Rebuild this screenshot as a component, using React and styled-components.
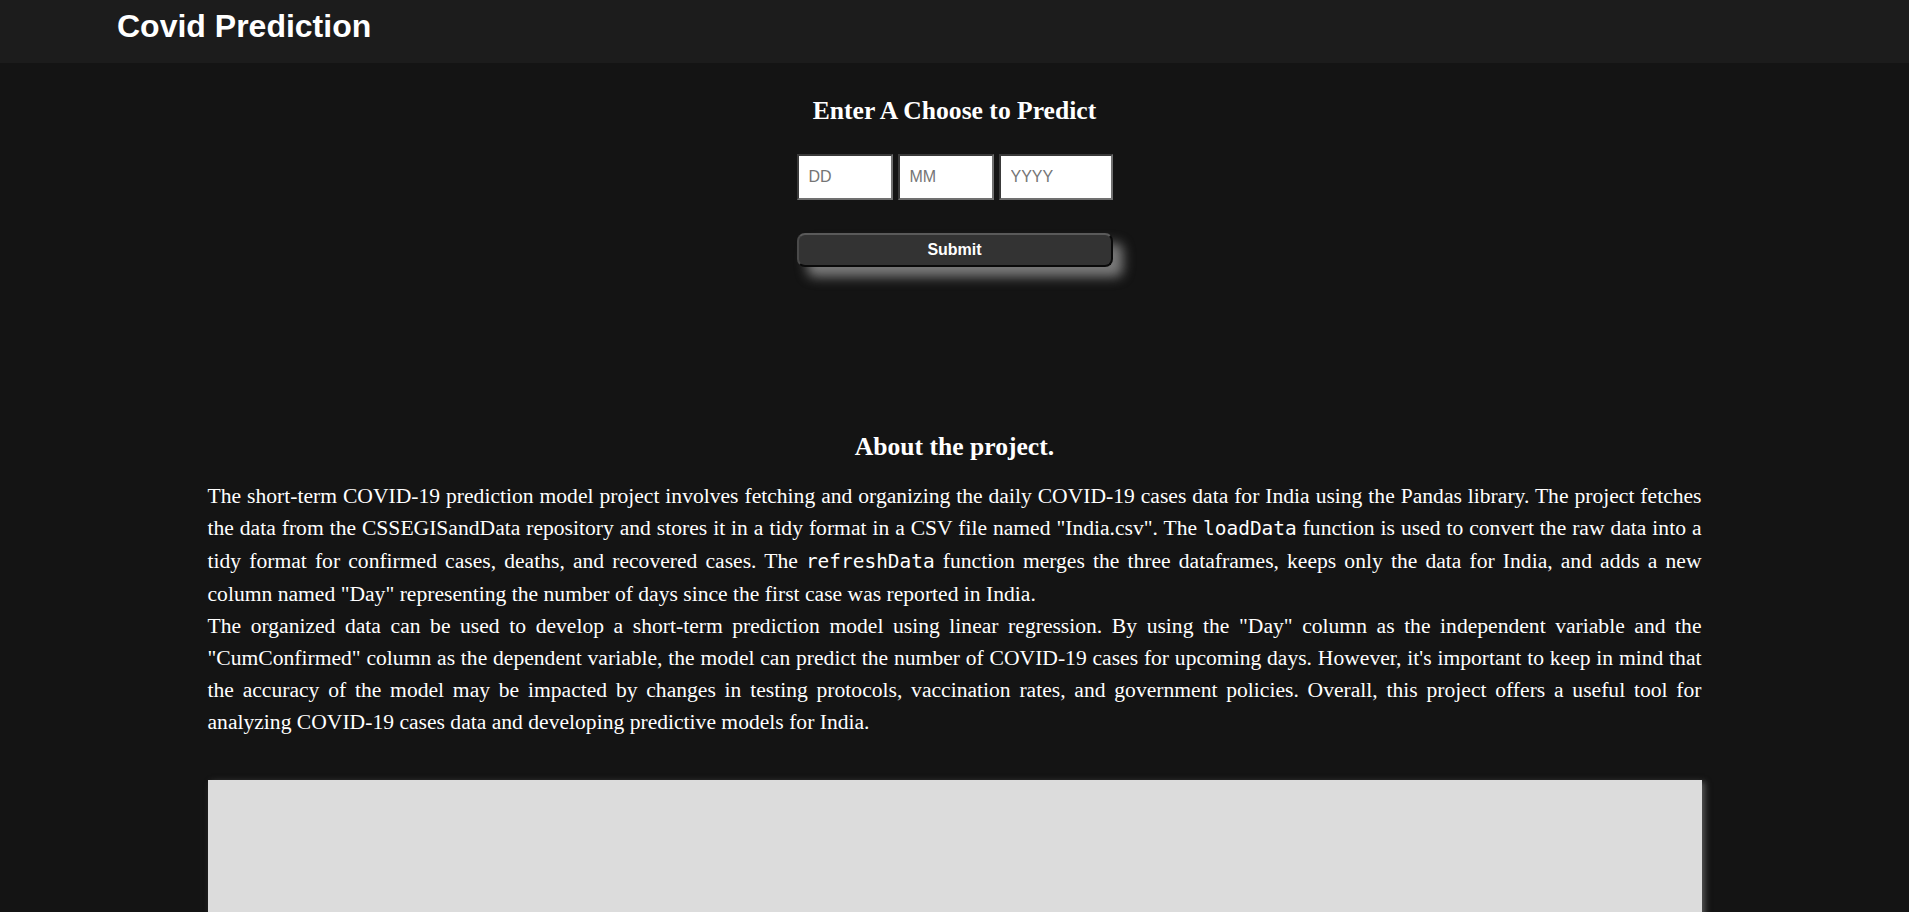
import React from 'react';
import styled, { createGlobalStyle } from 'styled-components';

const GlobalStyle = createGlobalStyle`
  * {
    box-sizing: border-box;
  }
  html,
  body {
    margin: 0;
    padding: 0;
    background-color: #141414;
    color: #fff;
    font-family: 'Liberation Serif', 'Times New Roman', serif;
  }
`;

const Header = styled.header`
  height: 63px;
  padding: 8px 0 0 117px;
  background-color: #1c1c1c;
`;

const Brand = styled.h1`
  margin: 0;
  font-family: 'Liberation Sans', Arial, sans-serif;
  font-size: 32px;
  font-weight: 700;
  line-height: 37px;
  color: #fff;
`;

const Main = styled.main`
  display: flex;
  flex-direction: column;
  align-items: center;
`;

const Heading = styled.h2`
  margin: ${props => props.$top || 0}px 0 0;
  font-size: 25.6px;
  font-weight: 700;
  line-height: 30px;
  text-align: center;
`;

const PredictForm = styled.form`
  display: flex;
  flex-direction: column;
  width: 316px;
`;

const InputRow = styled.div`
  display: flex;
  gap: 5px;
  margin-top: 28px;
`;

const DateInput = styled.input`
  width: ${props => props.$width}px;
  height: 46px;
  padding: 0 10px;
  background: #fff;
  border-style: solid;
  border-width: 2px;
  border-color: #3a3a3a #707070 #707070 #3a3a3a;
  font-family: 'Liberation Sans', Arial, sans-serif;
  font-size: 16px;
  color: #222;
  outline: none;

  ::placeholder {
    color: #757575;
  }
`;

const SubmitButton = styled.button`
  margin-top: 33px;
  height: 34px;
  width: 100%;
  border-radius: 8px;
  border-style: solid;
  border-width: 2px;
  border-color: #5a5a5a #0a0a0a #0a0a0a #4a4a4a;
  background-color: #333;
  color: #fff;
  font-family: 'Liberation Sans', Arial, sans-serif;
  font-size: 16px;
  font-weight: 700;
  box-shadow: 10px 10px 12px #7a7a7a;
  cursor: pointer;
`;

const About = styled.section`
  width: 1494px;
`;

const Para = styled.p`
  margin: ${props => props.$top || 0}px 0 0;
  font-size: 21.6px;
  line-height: 32px;
  text-align: justify;
`;

const Code = styled.code`
  font-family: 'DejaVu Sans Mono', monospace;
  font-size: 0.9em;
`;

const ChartBox = styled.div`
  width: 1494px;
  height: 520px;
  margin: 42px 0 40px;
  background-color: #dcdcdc;
  box-shadow: 3px 2px 6px #555;
`;

const App = () => (
  <>
    <GlobalStyle />
    <Header>
      <Brand>Covid Prediction</Brand>
    </Header>
    <Main>
      <Heading $top={33}>Enter A Choose to Predict</Heading>
      <PredictForm onSubmit={e => e.preventDefault()}>
        <InputRow>
          <DateInput $width={96} placeholder="DD" />
          <DateInput $width={96} placeholder="MM" />
          <DateInput $width={114} placeholder="YYYY" />
        </InputRow>
        <SubmitButton type="submit">Submit</SubmitButton>
      </PredictForm>

      <About>
        <Heading $top={165}>About the project.</Heading>
        <Para $top={18}>
          The short-term COVID-19 prediction model project involves fetching and
          organizing the daily COVID-19 cases data for India using the Pandas
          library. The project fetches the data from the CSSEGISandData
          repository and stores it in a tidy format in a CSV file named
          "India.csv". The <Code>loadData</Code> function is used to convert the
          raw data into a tidy format for confirmed cases, deaths, and recovered
          cases. The <Code>refreshData</Code> function merges the three
          dataframes, keeps only the data for India, and adds a new column named
          "Day" representing the number of days since the first case was
          reported in India.
        </Para>
        <Para>
          The organized data can be used to develop a short-term prediction
          model using linear regression. By using the "Day" column as the
          independent variable and the "CumConfirmed" column as the dependent
          variable, the model can predict the number of COVID-19 cases for
          upcoming days. However, it's important to keep in mind that the
          accuracy of the model may be impacted by changes in testing
          protocols, vaccination rates, and government policies. Overall, this
          project offers a useful tool for analyzing COVID-19 cases data and
          developing predictive models for India.
        </Para>
      </About>

      <ChartBox />
    </Main>
  </>
);

export default App;
